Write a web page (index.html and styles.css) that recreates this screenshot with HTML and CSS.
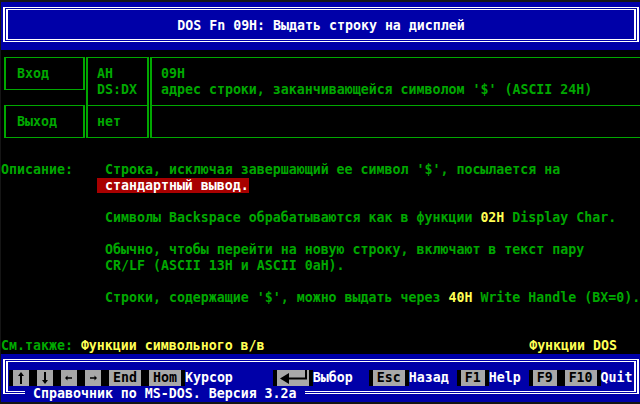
FILE: index.html
```html
<!DOCTYPE html>
<html lang="ru">
<head>
<meta charset="utf-8">
<title>DOS Fn 09H</title>
<link rel="stylesheet" href="styles.css">
</head>
<body>
<div class="screen">
  <header class="hdr">
    <div class="dframe">
      <div class="dframe-in hdr-in">
        <h1 class="title">DOS Fn 09H: Выдать строку на дисплей</h1>
      </div>
    </div>
  </header>

  <section class="regs">
    <div class="lcol">
      <div class="lbox">Вход</div>
      <div class="lbox">Выход</div>
    </div>
    <div class="tcol mcol">
      <div class="cell-top">AH<br>DS:DX</div>
      <div class="cell-bot">нет</div>
    </div>
    <div class="tcol rcol">
      <div class="cell-top">09H<br>адрес строки, заканчивающейся символом '$' (ASCII 24H)</div>
      <div class="cell-bot"></div>
    </div>
  </section>

  <section class="desc">
    <div class="label">Описание:</div>
    <div class="text">
      <p>Строка, исключая завершающий ее символ '$', посылается на<br><span class="link">стандартный вывод.</span></p>
      <p>Символы Backspace обрабатываются как в функции <span class="hl">02H</span> Display Char.</p>
      <p>Обычно, чтобы перейти на новую строку, включают в текст пару<br>CR/LF (ASCII 13H и ASCII 0aH).</p>
      <p>Строки, содержащие '$', можно выдать через <span class="hl">40H</span> Write Handle (BX=0).</p>
    </div>
  </section>

  <div class="seealso">
    <div>См.также: <span class="hl">Функции символьного в/в</span></div>
    <div class="hl">Функции DOS</div>
  </div>

  <footer class="ftr">
    <div class="dframe">
      <div class="dframe-in ftr-in">
        <div class="keys">
          <span class="key first"><svg class="ico" viewBox="0 0 8 16" width="8" height="16"><path d="M4 2 L7 6 H1 Z M3 6 H5 V14 H3 Z"/></svg></span>
          <span class="key"><svg class="ico" viewBox="0 0 8 16" width="8" height="16"><path d="M3 2 H5 V10 H3 Z M1 10 H7 L4 14 Z"/></svg></span>
          <span class="key"><svg class="ico" viewBox="0 0 8 16" width="8" height="16"><path d="M0 8 L2.5 5.5 V10.5 Z M2.5 7.25 H7 V8.75 H2.5 Z"/></svg></span>
          <span class="key"><svg class="ico" viewBox="0 0 8 16" width="8" height="16"><path d="M8 8 L5.5 5.5 V10.5 Z M1 7.25 H5.5 V8.75 H1 Z"/></svg></span>
          <span class="key">End</span>
          <span class="key">Hom</span>
          <span class="lbl">Курсор</span>
          <span class="key key-enter gap40"><svg class="ico" viewBox="0 0 32 16" width="32" height="16"><path d="M3 8.5 L12 3 V14 Z M12 7.5 H30 V9.5 H12 Z M28 0 H30 V9.5 H28 Z"/></svg></span>
          <span class="lbl">Выбор</span>
          <span class="key gap16">Esc</span>
          <span class="lbl">Назад</span>
          <span class="key gap8">F1</span>
          <span class="lbl">Help</span>
          <span class="key gap8">F9</span>
          <span class="key">F10</span>
          <span class="lbl">Quit</span>
        </div>
        <div class="caption">Справочник по MS-DOS. Версия 3.2а</div>
      </div>
    </div>
  </footer>
</div>
</body>
</html>
```

FILE: styles.css
```css
* {
  box-sizing: border-box;
  margin: 0;
  padding: 0;
}

html, body {
  width: 640px;
  height: 404px;
  overflow: hidden;
}

body {
  background: #151515;
  font-family: "DejaVu Sans Mono", "Liberation Mono", monospace;
  font-size: 13.28px;
  line-height: 16px;
  font-weight: bold;
  color: #00a800;
}

.screen {
  width: 640px;
  height: 400px;
  margin: 2px 0 0 1px;
  background: #000;
  display: flex;
  flex-direction: column;
  white-space: nowrap;
}

/* double frames (header / footer) */
.dframe {
  border: solid #fff;
  border-width: 1px 2px;
  padding: 1px;
}

.dframe-in {
  border: solid #fff;
  border-width: 1px 2px;
}

.hdr {
  height: 48px;
  background: #0000a8;
  padding: 5px 2px 0 2px;
}

.hdr-in {
  height: 31px;
  padding-top: 8px;
}

.title {
  font-size: inherit;
  font-weight: inherit;
  color: #fff;
  text-align: center;
}

/* register table */
.regs {
  height: 96px;
  display: flex;
  padding: 7px 0 0 3px;
}

.lcol {
  width: 81px;
  display: flex;
  flex-direction: column;
  gap: 15px;
}

.lbox {
  height: 33px;
  border: solid #00a800;
  border-width: 1px 2px;
  padding: 8px 0 0 11px;
}

.tcol {
  height: 81px;
  margin-left: 1px;
  border: solid #00a800;
  display: flex;
  flex-direction: column;
}

.mcol {
  width: 63px;
  border-width: 1px 2px;
}

.rcol {
  flex: 1;
  border-width: 1px 0 1px 2px;
}

.cell-top {
  height: 47px;
  padding: 8px 0 0 9px;
}

.cell-bot {
  flex: 1;
  border-top: 1px solid #00a800;
  padding: 8px 0 0 9px;
}

/* description */
.desc {
  height: 192px;
  padding-top: 16px;
  display: grid;
  grid-template-columns: 104px 1fr;
  align-content: start;
}

.text p + p {
  margin-top: 16px;
}

.link {
  background: #a80000;
  color: #fff;
  padding-left: 8px;
  margin-left: -8px;
}

.hl {
  color: #ffff54;
}

.seealso {
  height: 16px;
  display: flex;
  justify-content: space-between;
  padding-right: 24px;
}

/* footer */
.ftr {
  height: 48px;
  background: #0000a8;
  padding: 5px 2px 0 2px;
}

.ftr-in {
  height: 31px;
  padding-top: 8px;
}

.keys {
  height: 16px;
  display: flex;
  color: #fff;
}

.key {
  display: flex;
  background: #a8a8a8;
  color: #000;
  border-left: 4px solid #000;
  border-right: 4px solid #000;
  padding: 0 4px;
}

.key.first {
  margin-left: 1px;
}

.key-enter {
  padding: 0;
}

.gap40 { margin-left: 40px; }
.gap16 { margin-left: 16px; }
.gap8 { margin-left: 8px; }

.ico {
  display: block;
  fill: #000;
}

.caption {
  width: fit-content;
  margin-left: 17px;
  padding: 0 8px;
  height: 16px;
  background: #0000a8;
  color: #fff;
}
```
